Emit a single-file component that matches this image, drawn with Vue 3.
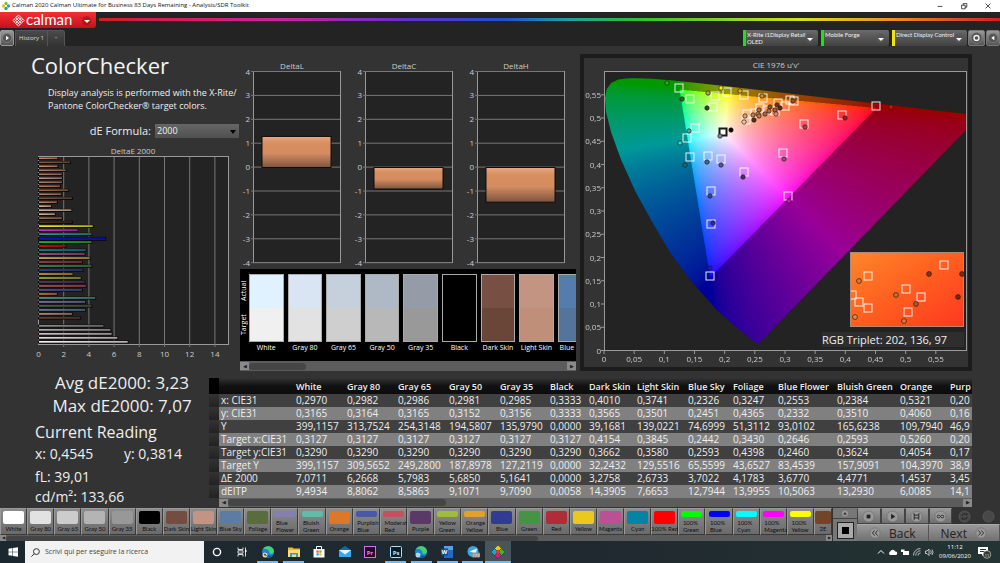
<script setup>
import { onMounted, ref } from 'vue'

const devices = [
  { name: 'X-Rite i1Display Retail', detail: 'OLED', color: '#16e516', size: 'wide' },
  { name: 'Mobile Forge', detail: '', color: '#16e516', size: 'slim' },
  { name: 'Direct Display Control', detail: '', color: '#f2e414', size: 'wide' }
]

const deltaE = [
  [1.5, '#d08a60'], [2.5, '#8a5a3c'], [1.5, '#d89468'], [2.15, '#c08060'], [1.85, '#b87c68'], [1.85, '#c89484'],
  [1.85, '#b08070'], [1.7, '#c87c48'], [2.35, '#a8683c'], [1.8, '#b88470'], [2.65, '#7c543c'], [1.45, '#c8845c'],
  [1, '#e8b890'], [2.6, '#e0b8a0'], [1.3, '#e8bc98'], [1.85, '#a87860'], [2.65, '#4c3028'], [4.3, '#ffff20'],
  [3.1, '#e030e0'], [4.2, '#30a8a0'], [5.3, '#1010c0'], [4.2, '#30c830'], [2.15, '#e01810'], [3.75, '#1890a0'],
  [3.65, '#b85890'], [4.05, '#d8c058'], [3.45, '#a84850'], [4.2, '#489850'], [3.5, '#404898'], [2.7, '#e0a040'],
  [3.35, '#a8c048'], [3.65, '#604070'], [3.75, '#b85868'], [3.45, '#5060a8'], [1.45, '#d88438'], [4.5, '#50a898'],
  [3.7, '#8080b0'], [4.2, '#586848'], [3.7, '#6888b0'], [2.65, '#c89484'], [3.3, '#684838'], [0, '#000000'],
  [5.15, '#989898'], [5.7, '#b8b8b8'], [5.8, '#d0d0d0'], [6.25, '#e8e8e8'], [7.07, '#ffffff']
]

const deltas = [
  { name: 'DeltaL', x: 253, value: 1.3 },
  { name: 'DeltaC', x: 365, value: -0.9 },
  { name: 'DeltaH', x: 477, value: -1.45 }
]
const steps = [4, 3, 2, 1, 0, -1, -2, -3, -4]

const swatches = [
  ['White', '#e0f1ff', '#f0f0f0'], ['Gray 80', '#dae5f3', '#e2e2e2'], ['Gray 65', '#c6d0dd', '#cfcfcf'],
  ['Gray 50', '#afb8c5', '#b8b8b8'], ['Gray 35', '#959ba7', '#999999'], ['Black', '#000000', '#000000'],
  ['Dark Skin', '#775043', '#694638'], ['Light Skin', '#c49483', '#bf8f79'], ['Blue', '#547cac', '#54749c']
]

const X = u => 604 + u * 603.3
const Y = v => 350.5 - v * 465
const uTicks = [0, 0.05, 0.1, 0.15, 0.2, 0.25, 0.3, 0.35, 0.4, 0.45, 0.5, 0.55]
const comma = n => String(n).replace('.', ',')

const locus = [
  [.2569, .0165], [.2557, .0159], [.2522, .0169], [.2461, .0226], [.2347, .035], [.2161, .0549], [.1877, .0871],
  [.1441, .151], [.1115, .208], [.0828, .2708], [.0521, .3427], [.0282, .4117], [.0119, .4698], [.0035, .5131],
  [.0014, .5432], [.0046, .5638], [.0123, .577], [.0231, .5837], [.036, .5861], [.0501, .5868], [.0792, .5856],
  [.1127, .5821], [.1531, .5766], [.2026, .5694], [.2623, .5604], [.3315, .5501], [.4035, .5393], [.4692, .5296],
  [.5203, .5219], [.5565, .5165], [.6005, .5099], [.6234, .5065]
]

const targets = [
  [679, 88], [690, 99], [715, 96], [713, 107], [727, 92], [744, 95], [763, 98], [695, 128], [687, 138],
  [690, 157], [708, 156], [721, 159], [744, 172], [711, 191], [711, 224], [710, 276], [783, 153], [788, 196],
  [790, 100], [794, 101], [785, 106], [876, 106], [842, 115], [804, 124], [747, 114], [746, 120], [760, 108],
  [755, 113], [767, 110], [778, 103], [775, 111]
]
const readings = [
  [667, 83, '#10b818'], [682, 99, '#286820'], [708, 93, '#a8b038'], [707, 108, '#304818'], [721, 88, '#f0f010'],
  [740, 91, '#e0b010'], [762, 96, '#d89018'], [689, 131, '#50a898'], [680, 143, '#10e8e8'], [731, 130, '#000000'],
  [720, 136, '#808898'], [685, 165, '#186888'], [707, 162, '#406898'], [721, 165, '#5058a0'], [743, 177, '#502860'],
  [710, 196, '#304898'], [713, 223, '#2828a0'], [710, 268, '#1818d8'], [784, 159, '#a04888'], [789, 201, '#d810d0'],
  [891, 107, '#d01010'], [845, 118, '#a81820'], [805, 127, '#b83848'], [793, 101, '#985018'], [745, 116, '#e0a070'],
  [744, 122, '#f0c8b0'], [753, 115, '#c08050'], [759, 110, '#b07040'], [758, 114, '#c88858'], [754, 120, '#503020'],
  [759, 116, '#c07850'], [765, 114, '#a86848'], [770, 107, '#885030'], [769, 111, '#b87040'], [777, 105, '#703818'],
  [775, 110, '#a86038'], [780, 108, '#602810'], [776, 114, '#e09070']
]
const insetTargets = [[944, 265], [868, 276], [906, 289], [921, 297], [859, 302], [868, 308], [908, 312], [852, 295]]
const insetReadings = [
  [929, 274, '#7a3a1c'], [859, 281, '#d08040'], [896, 295, '#c87030'], [916, 304, '#b05828'], [958, 297, '#702c14'],
  [855, 317, '#e09048'], [904, 321, '#e07840'], [962, 274, '#70301c']
]

const plot = ref(null)

function colorAt(u, v) {
  const X1 = (9 * u) / (4 * v)
  const Z1 = (12 - 3 * u - 20 * v) / (4 * v)
  const rgb = [
    3.2406 * X1 - 1.5372 - 0.4986 * Z1,
    -0.9689 * X1 + 1.8758 + 0.0415 * Z1,
    0.0557 * X1 - 0.204 + 1.057 * Z1
  ]
  const inside = rgb.every(c => c >= -0.002)
  const peak = Math.max(...rgb, 0.0001)
  return rgb.map(c => Math.pow(Math.max(c, 0) / peak, 1 / 1.9) * (inside ? 255 : 153))
}

onMounted(() => {
  const canvas = plot.value
  const { width: w, height: h } = canvas
  const ctx = canvas.getContext('2d')
  const image = ctx.createImageData(w, h)
  for (let y = 0; y < h; y++) {
    for (let x = 0; x < w; x++) {
      const [r, g, b] = colorAt((x / w) * 0.6, Math.max(0.6 * (1 - y / h), 0.001))
      image.data.set([r, g, b, 255], (y * w + x) * 4)
    }
  }
  ctx.putImageData(image, 0, 0)
  ctx.globalCompositeOperation = 'destination-in'
  ctx.beginPath()
  locus.forEach(([u, v]) => ctx.lineTo((u / 0.6) * w, (1 - v / 0.6) * h))
  ctx.closePath()
  ctx.fill()
})

const columns = ['White', 'Gray 80', 'Gray 65', 'Gray 50', 'Gray 35', 'Black', 'Dark Skin', 'Light Skin', 'Blue Sky', 'Foliage', 'Blue Flower', 'Bluish Green', 'Orange', 'Purp']
const widths = [51, 51, 51, 51, 50, 39, 48, 51, 45, 45, 59, 63, 50, 24]
const rows = [
  ['x: CIE31', '0,2970', '0,2982', '0,2986', '0,2981', '0,2985', '0,3333', '0,4010', '0,3741', '0,2326', '0,3247', '0,2553', '0,2384', '0,5321', '0,20'],
  ['y: CIE31', '0,3165', '0,3164', '0,3165', '0,3152', '0,3156', '0,3333', '0,3565', '0,3501', '0,2451', '0,4365', '0,2332', '0,3510', '0,4060', '0,16'],
  ['Y', '399,1157', '313,7524', '254,3148', '194,5807', '135,9790', '0,0000', '39,1681', '139,0221', '74,6999', '51,3112', '93,0102', '165,6238', '109,7940', '46,9'],
  ['Target x:CIE31', '0,3127', '0,3127', '0,3127', '0,3127', '0,3127', '0,3127', '0,4154', '0,3845', '0,2442', '0,3430', '0,2646', '0,2593', '0,5260', '0,20'],
  ['Target y:CIE31', '0,3290', '0,3290', '0,3290', '0,3290', '0,3290', '0,3290', '0,3662', '0,3580', '0,2593', '0,4398', '0,2460', '0,3624', '0,4054', '0,17'],
  ['Target Y', '399,1157', '309,5652', '249,2800', '187,8978', '127,2119', '0,0000', '32,2432', '129,5516', '65,5599', '43,6527', '83,4539', '157,9091', '104,3970', '38,9'],
  ['ΔE 2000', '7,0711', '6,2668', '5,7983', '5,6850', '5,1641', '0,0000', '3,2758', '2,6733', '3,7022', '4,1783', '3,6770', '4,4771', '1,4537', '3,45'],
  ['dEITP', '9,4934', '8,8062', '8,5863', '9,1071', '9,7090', '0,0058', '14,3905', '7,6653', '12,7944', '13,9955', '10,5063', '13,2930', '6,0085', '14,1']
]

const patches = [
  ['White', '#ffffff'], ['Gray 80', '#e2e2e2'], ['Gray 65', '#cccccc'], ['Gray 50', '#b4b4b4'], ['Gray 35', '#989898'],
  ['Black', '#000000'], ['Dark Skin', '#744c40'], ['Light Skin', '#c49482'], ['Blue Sky', '#5c7ca4'], ['Foliage', '#586c3c'],
  ['Blue Flower', '#8480b4', 1], ['Bluish Green', '#60bca8', 1], ['Orange', '#dc7828'], ['Purplish Blue', '#4858a8', 1],
  ['Moderate Red', '#c45060', 1], ['Purple', '#5c3868'], ['Yellow Green', '#a0bc3c', 1], ['Orange Yellow', '#e4a028', 1],
  ['Blue', '#303c94'], ['Green', '#449444'], ['Red', '#b02c38'], ['Yellow', '#ecc81c'], ['Magenta', '#bc5094'],
  ['Cyan', '#0484a4'], ['100% Red', '#ff0000'], ['100% Green', '#00ff00', 1], ['100% Blue', '#0000ff', 1],
  ['100% Cyan', '#00ffff', 1], ['100% Magenta', '#ff00ff', 1], ['100% Yellow', '#ffff00', 1], ['2E', '#744428']
]
</script>

<template>
  <div class="window">
    <header class="titlebar">
      <svg class="app-icon" viewBox="0 0 12 12" aria-hidden="true">
        <circle cx="6" cy="3" r="2" fill="#7ac143" /><circle cx="3" cy="6" r="2" fill="#e8c020" />
        <circle cx="9" cy="6" r="2" fill="#20a0d8" /><circle cx="6" cy="9" r="2" fill="#30a860" />
      </svg>
      <span class="title">Calman 2020 Calman Ultimate for Business 83 Days Remaining  - Analysis/SDR Toolkit</span>
      <button class="win" aria-label="Minimize"><svg viewBox="0 0 10 10"><path d="M2 5.500h6" /></svg></button>
      <button class="win" aria-label="Restore"><svg viewBox="0 0 10 10"><path d="M2 4h4.500v4.500H2zM4 4V2h4.500v4.500H6.500" /></svg></button>
      <button class="win" aria-label="Close"><svg viewBox="0 0 10 10"><path d="M2 2l6 6M8 2l-6 6" /></svg></button>
    </header>

    <div class="brandbar">
      <button class="brand">
        <svg class="brand-mark" viewBox="0 0 14 14" aria-hidden="true">
          <path d="M7 1l6 6-6 6-6-6zM4 4l6 6M10 4l-6 6M5.500 2.500l6 6M8.500 2.500l-6 6M2.500 5.500l6 6M11.500 5.500l-6 6" />
        </svg>
        <span class="brand-name">calman</span>
        <i class="caret ring"></i>
      </button>
      <div class="rainbow"></div>
    </div>

    <nav class="tabs">
      <button class="knob" aria-label="Expand"><svg viewBox="0 0 12 14"><circle cx="6" cy="7" r="4.500" /><path d="M5 4.800L8 7 5 9.200z" /></svg></button>
      <button class="tab">History 1</button>
      <button class="tab add" aria-label="Add tab"><span>+</span></button>
      <span class="spacer"></span>
      <button v-for="d in devices" :key="d.name" class="device" :class="d.size">
        <i class="led" :style="{ background: d.color }"></i>
        <span class="device-text">{{ d.name }}<br v-if="d.detail">{{ d.detail }}</span>
        <i class="caret ring dark"></i>
      </button>
      <button class="knob right" aria-label="Settings"><svg viewBox="0 0 14 14"><circle cx="7" cy="7" r="5.500" /><circle class="gear" cx="7" cy="7" r="2.500" /></svg></button>
      <button class="knob right small" aria-label="Collapse"><svg viewBox="0 0 14 14"><circle cx="7" cy="7" r="5.500" /><path d="M8.500 4.500L5 7l3.500 2.500z" /></svg></button>
    </nav>

    <main class="main">
      <section class="top">
        <div class="summary">
          <h1>ColorChecker</h1>
          <p class="intro">Display analysis is performed with the X-Rite/<br>Pantone ColorChecker® target colors.</p>
          <div class="formula">
            <label for="formula">dE Formula:</label>
            <select id="formula"><option>2000</option></select>
          </div>
          <svg class="chart" viewBox="0 145 240 220">
            <defs>
              <linearGradient id="shade" x1="0" x2="1" y1="0" y2="0">
                <stop offset="0" stop-color="#000" stop-opacity="0" /><stop offset="1" stop-color="#000" stop-opacity=".3" />
              </linearGradient>
            </defs>
            <text class="label mid" x="133" y="154">DeltaE 2000</text>
            <rect class="plot" x="38.500" y="156.500" width="190" height="188" />
            <line v-for="n in 7" :key="n" class="grid" :x1="38.5 + n * 25.2" :x2="38.5 + n * 25.2" y1="157" y2="347" />
            <g v-for="(b, i) in deltaE" :key="'b' + i">
              <template v-if="b[0]">
                <rect x="38" :y="157 + i * 3.99" :width="b[0] * 12.6 + 1.5" :height="i === 20 ? 4 : 3" fill="#0c0808" />
                <rect x="39" :y="157.5 + i * 3.99" :width="b[0] * 12.6 - .5" :height="i === 20 ? 2.6 : 1.6" :fill="b[1]" />
                <rect x="39" :y="157.5 + i * 3.99" :width="b[0] * 12.6 - .5" height="1.600" fill="url(#shade)" />
              </template>
            </g>
            <text v-for="n in 8" :key="'t' + n" class="label mid" :x="38.5 + (n - 1) * 25.2" y="357">{{ (n - 1) * 2 }}</text>
          </svg>
        </div>

        <div class="middle">
          <svg class="chart" viewBox="240 58 340 211">
            <defs>
              <linearGradient id="copper" x1="0" x2="0" y1="0" y2="1">
                <stop offset="0" stop-color="#e4a888" /><stop offset=".2" stop-color="#d8905f" />
                <stop offset=".55" stop-color="#d48c60" /><stop offset="1" stop-color="#7c5440" />
              </linearGradient>
            </defs>
            <g v-for="d in deltas" :key="d.name">
              <text class="label mid" :x="d.x + 39" y="69">{{ d.name }}</text>
              <rect class="plot" :x="d.x + .5" y="71.500" width="87" height="191" />
              <g v-for="(s, i) in steps" :key="s">
                <line class="grid" :x1="d.x - 2" :x2="d.x + 87" :y1="71.5 + i * 23.9" :y2="71.5 + i * 23.9" />
                <text class="label end" :x="d.x - 3" :y="74.5 + i * 23.9">{{ s }}</text>
              </g>
              <rect :x="d.x + 9" :y="d.value > 0 ? 167.5 - d.value * 23.9 : 167.5" width="69" :height="Math.abs(d.value) * 23.9" fill="url(#copper)" stroke="#100c0a" />
            </g>
          </svg>
          <div class="compare">
            <div class="sides"><span>Actual</span><span>Target</span></div>
            <div v-for="s in swatches" :key="s[0]" class="swatch">
              <div class="pair"><i :style="{ background: s[1] }"></i><i :style="{ background: s[2] }"></i></div>
              <span>{{ s[0] }}</span>
            </div>
          </div>
          <div class="scroll"><button aria-label="Scroll left">◀</button><i class="thumb short"></i><button aria-label="Scroll right">▶</button></div>
        </div>

        <div class="cie">
          <svg class="chart" viewBox="584 58 384 309">
            <defs>
              <linearGradient id="warm" x1="0" y1="0" x2="1" y2="1">
                <stop offset="0" stop-color="#ff8628" /><stop offset=".5" stop-color="#ff5e20" /><stop offset="1" stop-color="#ff3820" />
              </linearGradient>
              <clipPath id="inset"><rect x="851" y="253" width="113" height="73" /></clipPath>
            </defs>
            <text class="label mid" x="776" y="68">CIE 1976 u'v'</text>
            <rect class="plot" x="604.500" y="71.500" width="362" height="279" />
            <foreignObject x="604" y="71.500" width="362" height="279">
              <canvas ref="plot" class="gamut" width="724" height="558"></canvas>
            </foreignObject>
            <path class="axis" d="M604.500 350.500V71.500H966.500V350.500z" />
            <g v-for="t in uTicks" :key="t">
              <line class="axis" :x1="X(t)" :x2="X(t)" y1="351" y2="354" />
              <line class="axis" x1="601" x2="604" :y1="Y(t)" :y2="Y(t)" />
              <text class="label mid" :x="X(t)" y="362">{{ comma(t) }}</text>
              <text class="label end" x="601" :y="Y(t) + 3">{{ comma(t) }}</text>
            </g>
            <rect v-for="(p, i) in targets" :key="'s' + i" class="target" :x="p[0] - 4" :y="p[1] - 4" width="8" height="8" />
            <rect class="target white-point" x="719.500" y="128.500" width="7" height="7" />
            <circle v-for="(p, i) in readings" :key="'c' + i" class="reading" :cx="p[0]" :cy="p[1]" r="2.200" :fill="p[2]" />
            <rect x="850.500" y="252.500" width="113" height="74" fill="url(#warm)" stroke="#b08878" />
            <g clip-path="url(#inset)">
              <rect v-for="(p, i) in insetTargets" :key="'is' + i" class="target" :x="p[0] - 4" :y="p[1] - 4" width="8" height="8" />
              <circle v-for="(p, i) in insetReadings" :key="'ic' + i" class="reading" :cx="p[0]" :cy="p[1]" r="2.400" :fill="p[2]" />
            </g>
            <rect x="822" y="332" width="142" height="15" fill="#2e2e2e" />
            <text class="triplet" x="822" y="344">RGB Triplet: 202, 136, 97</text>
          </svg>
        </div>
      </section>

      <section class="bottom">
        <div class="stats">
          <p class="big">Avg dE2000: 3,23</p>
          <p class="big">Max dE2000: 7,07</p>
          <h2>Current Reading</h2>
          <p class="pair-line"><span>x: 0,4545</span><span>y: 0,3814</span></p>
          <p class="line gap">fL: 39,01</p>
          <p class="line">cd/m²: 133,66</p>
        </div>
        <div class="data">
          <div class="clip">
            <table>
              <colgroup><col class="pick-col"><col class="name-col"><col v-for="(w, i) in widths" :key="i" :style="{ width: w + 'px' }"></colgroup>
              <thead><tr><td class="pick"></td><th></th><th v-for="c in columns" :key="c" scope="col">{{ c }}</th></tr></thead>
              <tbody>
                <tr v-for="r in rows" :key="r[0]">
                  <td class="pick"></td>
                  <th scope="row">{{ r[0] }}</th>
                  <td v-for="(c, i) in r.slice(1)" :key="i">{{ c }}</td>
                </tr>
              </tbody>
            </table>
          </div>
          <div class="scroll table-scroll"><button aria-label="Scroll left">◀</button><i class="thumb long"></i><button aria-label="Scroll right">▶</button></div>
        </div>
      </section>
    </main>

    <section class="palette">
      <div class="strip">
        <div class="patches">
          <button v-for="p in patches" :key="p[0]" class="patch" :class="{ two: p[2] }">
            <i :style="{ background: p[1] }"></i><span>{{ p[0] }}</span>
          </button>
        </div>
        <div class="scroll strip-scroll"><button aria-label="Scroll left">◀</button><i class="thumb strip-thumb"></i><button aria-label="Scroll right">▶</button></div>
      </div>
      <div class="meter">
        <button class="eject" aria-label="Options"><svg viewBox="0 0 12 10"><circle cx="6" cy="5" r="4" /><path d="M4 6l2-2.500L8 6z" /></svg></button>
        <button class="full" aria-label="Pattern window"><i></i></button>
      </div>
      <div class="controls">
        <div class="tools">
          <button aria-label="Stop"><svg viewBox="0 0 14 14"><circle cx="7" cy="7" r="6" /><path d="M5 5h4v4H5z" /></svg></button>
          <button aria-label="Play"><svg viewBox="0 0 14 14"><circle cx="7" cy="7" r="6" /><path d="M5.500 4L10 7l-4.500 3z" /></svg></button>
          <button aria-label="Step"><svg viewBox="0 0 14 14"><circle cx="7" cy="7" r="6" /><path class="stroke" d="M4.500 3.500v7M9.500 3.500v7M4.500 5.500h5M4.500 8.500h5" /></svg></button>
          <button aria-label="Loop"><svg viewBox="0 0 14 14"><circle cx="7" cy="7" r="6" /><path class="stroke" d="M7 7c-1-2-3.500-2-3.500 0s2.500 2 3.500 0 3.500-2 3.500 0-2.500 2-3.500 0" /></svg></button>
          <button class="off" aria-label="Refresh"><svg viewBox="0 0 14 14"><circle cx="7" cy="7" r="6" /><path class="stroke" d="M4 6.500a3 3 0 0 1 5.500-1V3.500M10 7.500a3 3 0 0 1-5.500 1v2" /></svg></button>
          <button class="off" aria-label="Record"><svg viewBox="0 0 14 14"><circle cx="7" cy="7" r="6" /></svg></button>
        </div>
        <div class="steps">
          <button><svg viewBox="0 0 14 14"><circle cx="7" cy="7" r="6" /><path class="stroke" d="M6.500 4L4 7l2.500 3M10 4L7.500 7l2.500 3" /></svg>Back</button>
          <button>Next<svg viewBox="0 0 14 14"><circle cx="7" cy="7" r="6" /><path class="stroke" d="M4 4l2.500 3L4 10M7.500 4L10 7l-2.500 3" /></svg></button>
        </div>
      </div>
    </section>

    <footer class="taskbar">
      <button class="start" aria-label="Start"><svg viewBox="0 0 12 12"><path fill="#fff" d="M1.500 2.700l4-.6v3.600h-4zM6 2l5-.8v4.500H6zM1.500 6.200h4v3.600l-4-.6zM6 6.200h5v4.500L6 9.900z" /></svg></button>
      <label class="search">
        <svg viewBox="0 0 12 12"><circle cx="7" cy="5" r="3.200" /><path d="M4.700 7.300L1.500 10.500" /></svg>
        <input type="text" placeholder="Scrivi qui per eseguire la ricerca" aria-label="Scrivi qui per eseguire la ricerca">
      </label>
      <div class="tasks">
        <button class="task" aria-label="Cortana"><svg viewBox="0 0 14 14"><circle cx="7" cy="7" r="3.600" fill="none" stroke="#fff" stroke-width="1.400" /></svg></button>
        <button class="task" aria-label="Task view"><svg viewBox="0 0 14 14"><path d="M3 2.500v2h5v-2M3 11.500v-2h5v2M3 5.800h5v2.400H3zM10.500 2.500v9" fill="none" stroke="#ddd" /><path d="M10 5h1.500v2H10z" fill="#fff" /></svg></button>
        <button class="task open" aria-label="Edge">
          <svg viewBox="0 0 14 14"><circle cx="7" cy="7" r="6" fill="#1688d0" /><path d="M2 4.500C4 0 12 0 13 6c.3 2.500-3 3.500-4.500 2.500C9 5 5 3 2 4.500z" fill="#48d070" /><path d="M5.500 7c0 3 3 4.500 6 3.500C8 14.500 2.500 12 3 8z" fill="#1050a0" /><circle cx="4" cy="10" r="2.500" fill="#e8d8b8" /><path d="M2.500 10l1.500-1.500L6 11z" fill="#383028" /></svg>
        </button>
        <button class="task open" aria-label="File Explorer"><svg viewBox="0 0 14 14"><path d="M1 2.500h4.500l1 1H13V12H1z" fill="#f4b830" /><path d="M1 5h12v7H1z" fill="#ffdc78" /><path d="M3 8h8v4H9V9.500H5V12H3z" fill="#3898d8" /></svg></button>
        <button class="task" aria-label="Store"><svg viewBox="0 0 14 14"><path d="M4.500 4V1.500h5V4" fill="none" stroke="#fff" /><path d="M1.500 4h11v8.500h-11z" fill="#fff" /><path d="M4.500 5.500h2.200v2.200H4.500z" fill="#f05020" /><path d="M7.300 5.500h2.200v2.200H7.300z" fill="#78b810" /><path d="M4.500 8.300h2.200v2.200H4.500z" fill="#10a0e8" /><path d="M7.300 8.300h2.200v2.200H7.300z" fill="#f8b810" /></svg></button>
        <button class="task" aria-label="Mail"><svg viewBox="0 0 14 14"><path d="M1 5l6-4 6 4v7H1z" fill="#1068b8" /><path d="M1 5h12v7H1z" fill="#38a8e8" /><path d="M1 5l6 4.500L13 5z" fill="#e8f4fc" /></svg></button>
        <button class="task" aria-label="Premiere Pro"><svg viewBox="0 0 14 14"><rect x="1.500" y="1.500" width="11" height="11" fill="#28002c" stroke="#d070e8" /><text x="7" y="9.500" class="badge" fill="#e088f8">Pr</text></svg></button>
        <button class="task open" aria-label="Photoshop"><svg viewBox="0 0 14 14"><rect x="1.500" y="1.500" width="11" height="11" rx="1" fill="#061e2c" stroke="#a8e0f8" /><text x="7" y="9.500" class="badge" fill="#b8e8ff">Ps</text></svg></button>
        <button class="task open" aria-label="Edge profile"><svg viewBox="0 0 14 14"><circle cx="7" cy="7" r="6" fill="#1688d0" /><path d="M2 4.500C4 0 12 0 13 6c.3 2.500-3 3.500-4.500 2.500C9 5 5 3 2 4.500z" fill="#48d070" /><path d="M5.500 7c0 3 3 4.500 6 3.500C8 14.500 2.500 12 3 8z" fill="#1050a0" /><circle cx="4" cy="10" r="2.500" fill="#a8d8f0" /></svg></button>
        <button class="task open" aria-label="Word"><svg viewBox="0 0 14 14"><path d="M4 1h9v12H4z" fill="#58a0e8" /><path d="M4 5h9v8H4z" fill="#2468c8" /><path d="M1 3.500h7v7H1z" fill="#184890" /><text x="4.500" y="9" class="badge" fill="#fff">W</text></svg></button>
        <button class="task open" aria-label="Telegram"><svg viewBox="0 0 14 14"><circle cx="7" cy="6.500" r="5.500" fill="#38a8e0" /><path d="M3.500 6.500L11 3.500l-1.500 6-2.500-2z" fill="#fff" /><rect x="6" y="7.500" width="8" height="5" rx="1" fill="#909498" /><text x="10" y="11.500" class="tiny" fill="#fff">172</text></svg></button>
        <button class="task open active" aria-label="Calman"><svg viewBox="0 0 14 14"><g stroke="#20302c" stroke-width=".5"><path d="M7 0l3.500 3.500L7 7 3.500 3.500z" fill="#e8c810" stroke-linejoin="round" /><path d="M3.500 3.500L7 7l-3.500 3.500L0 7z" fill="#18a8d0" /><path d="M10.500 3.500L14 7l-3.500 3.500L7 7z" fill="#30b838" /><path d="M7 7l3.500 3.500L7 14l-3.500-3.500z" fill="#d81888" /></g><path d="M7 4.500L9.500 7 7 9.500 4.500 7z" fill="#e83828" /></svg></button>
      </div>
      <span class="spacer"></span>
      <div class="tray">
        <svg viewBox="0 0 10 10"><path d="M2 6.500l3-3 3 3" fill="none" stroke="#fff" /></svg>
        <svg viewBox="0 0 10 10"><path d="M2 8a2 2 0 0 1 .2-3.500 2.700 2.700 0 0 1 5 0A1.800 1.800 0 0 1 8 8z" fill="#fff" /></svg>
        <svg viewBox="0 0 10 10"><path d="M3 4h6v4H3zM1 2.500h3.500V5H1z" fill="#fff" /></svg>
        <svg viewBox="0 0 10 10"><path d="M1.500 8.500a7 7 0 0 1 7-7M3.800 8.500a4.500 4.500 0 0 1 4.700-4.700M6 8.500a2.500 2.500 0 0 1 2.500-2.500" fill="none" stroke="#b8bcbc" /></svg>
        <svg viewBox="0 0 10 10"><path d="M1.500 4H3l2-2v6.500l-2-2H1.500z M6.500 3.500q1.500 1.700 0 3.500M8 2.500q2 2.700 0 5.500" fill="none" stroke="#e8e8e8" stroke-width=".8" /></svg>
      </div>
      <div class="clock"><time>11:12</time><time>09/06/2020</time></div>
      <button class="notes" aria-label="Notifications"><svg viewBox="0 0 16 14"><path d="M2 2h10v7H8l-2 2V9H2z" fill="#fff" /><path d="M4 4.500h6M4 6.500h5" stroke="#283838" /><circle cx="11" cy="9.500" r="3.800" fill="#30383a" stroke="#c8c8c8" stroke-width=".7" /><text x="11" y="11.500" class="tiny" fill="#fff">11</text></svg></button>
    </footer>
  </div>
</template>

<style>
html, body { background: #1e1e1e; }
</style>

<style scoped>
.window { display: flex; flex-direction: column; min-height: 100vh; background: #232323; color: #eee; font-family: "Open Sans", "Noto Sans", sans-serif; font-size: 8px; line-height: 1.2; overflow: hidden; }
* { box-sizing: border-box; }
button, select, input { font: inherit; color: inherit; border: 0; padding: 0; margin: 0; background: none; }
h1, h2, p { margin: 0; font-weight: 400; }
i { display: block; font-style: normal; }
svg { display: block; }
.spacer { flex: 1; }

.titlebar { display: flex; align-items: center; height: 12px; background: #fff; color: #111; font-size: 6px; }
.app-icon { width: 10px; height: 10px; margin: 0 1px 0 1px; }
.title { flex: 1; white-space: nowrap; }
.win { width: 24px; height: 10px; }
.win svg { width: 8px; height: 8px; margin: 1px auto; fill: none; stroke: #222; }

.brandbar { display: flex; height: 17px; }
.brand { display: flex; align-items: center; width: 96px; height: 16px; padding: 0 5px 0 12px; color: #fff; background: linear-gradient(#f03038, #c81018); border-radius: 0 0 3px 0; }
.brand-mark { width: 13px; height: 13px; fill: none; stroke: #fff; stroke-width: .9; }
.brand-name { flex: 1; padding: 0 0 3px 1px; text-align: left; font-family: "Lato", sans-serif; font-size: 15px; line-height: 14px; }
.caret { position: relative; }
.ring { width: 9px; height: 9px; border-radius: 50%; background: rgba(120, 0, 0, .35); }
.ring::after { content: ""; position: absolute; left: 2px; top: 4px; border: 3px solid transparent; border-top-color: #fff; border-bottom: 0; }
.ring.dark { background: #555; }
.rainbow { flex: 1; height: 3px; margin: 6px 0 0 3px; background: linear-gradient(90deg, #d02028, #d020a0 20%, #6030d0 35%, #2050d8 45%, #20a0a0 52%, #30c030 60%, #d8e020 78%, #f09020 88%, #d02020); }

.tabs { display: flex; height: 17px; padding-top: 1px; }
.knob { width: 14px; margin-right: 1px; border: 1px solid #999; border-radius: 2px; background: linear-gradient(#999, #555); }
.knob svg { width: 12px; height: 14px; }
.knob circle { fill: #555; stroke: #888; stroke-width: .6; }
.knob path { fill: #fff; }
.knob .gear { fill: none; stroke: #eee; stroke-width: 1.4; }
.knob.right { width: 17px; margin: 0 0 0 1px; border-color: #777; }
.knob.right.small { width: 14px; }
.knob.right svg { width: 100%; }
.tab { padding: 0 3px; border: 1px solid #555; border-bottom: 0; background: linear-gradient(#4a4a4a, #333); color: #ddd; font-size: 6px; }
.tab.add { width: 18px; margin-left: -1px; border-radius: 0 3px 0 0; color: #888; }
.device { display: flex; align-items: center; height: 16px; margin-right: 3px; padding-right: 4px; color: #eee; font-family: "Lato", sans-serif; font-size: 6px; line-height: 7px; text-align: left; background: linear-gradient(#6a6a6a, #424242); border-radius: 2px; }
.device:nth-last-child(3) { margin-right: 0; }
.device.wide { width: 75px; }
.device.slim { width: 68px; }
.led { width: 3px; height: 16px; margin-right: 1px; }
.device-text { flex: 1; align-self: flex-start; white-space: nowrap; padding-top: 1px; }
.device .ring { margin-left: -2px; }

.main { flex: 1; background: #333; }
.top { display: grid; grid-template-columns: minmax(0, 24fr) minmax(0, 34fr) minmax(0, 42fr); }
.chart { width: 100%; }
.label { fill: #ccc; font-size: 8px; }
.mid, .badge, .tiny { text-anchor: middle; }
.end { text-anchor: end; }
.plot { fill: #232323; stroke: #999; }
.grid { stroke: #777; }
.axis { fill: none; stroke: #999; }
.gamut { display: block; width: 100%; height: 100%; }
.target { fill: none; stroke: #fff; stroke-opacity: .9; }
.white-point { stroke: #000; stroke-width: 2; }
.reading { stroke: #301810; stroke-width: .7; }
.triplet { fill: #eee; font-size: 11px; }
.badge { font-size: 6px; font-weight: 700; }
.tiny { font-size: 4px; }

h1 { margin: 4px 0 0 31px; font-size: 22px; line-height: 30px; color: #f4f4f4; }
.intro { margin: 6px 0 0 48px; font-size: 9px; line-height: 13px; white-space: nowrap; }
.formula { position: relative; display: flex; align-items: center; justify-content: flex-end; gap: 4px; height: 14px; margin: 12px 1px 7px 0; font-size: 11px; }
.formula select { width: 84px; height: 14px; padding: 0 2px; appearance: none; font-size: 9px; color: #eee; background: linear-gradient(#666, #505050); border-radius: 0; }
.formula::after { content: ""; position: absolute; right: 3px; top: 6px; border: 3px solid transparent; border-top: 4px solid #000; border-bottom: 0; }

.middle { padding-top: 12px; }
.compare { display: flex; gap: 4px; height: 92px; margin-right: 4px; overflow: hidden; padding-top: 5px; background: #000; color: #fff; }
.sides { display: flex; flex: none; flex-direction: row-reverse; justify-content: space-around; width: 5px; height: 68px; writing-mode: vertical-rl; transform: rotate(180deg); font-size: 7px; line-height: 7px; }
.swatch { flex: 0 0 10.3%; font-size: 7px; line-height: 10px; text-align: center; white-space: nowrap; }
.pair { border: 1px solid #aaa; margin-bottom: 1px; }
.pair i { height: 33px; }
.swatch:last-child { flex: 1; min-width: 0; }
.swatch:last-child .pair { border-right: 0; }

.scroll { display: flex; align-items: center; height: 10px; margin-right: 4px; background: #5c5c5c; }
.scroll button { width: 9px; height: 8px; color: #222; background: #8a8a8a; font-size: 5px; line-height: 7px; }
.scroll button:last-child { margin-left: auto; }
.thumb { height: 7px; border-radius: 4px; background: #454545; }
.short { width: 17%; }
.long { width: 29%; }
.strip-thumb { width: 64%; }

.cie { align-self: start; margin: 8px 28px 0 0; border: 4px solid #1c1c1c; }

.bottom { display: grid; grid-template-columns: 209px minmax(0, 1fr); padding-right: 28px; }
.stats { padding-left: 35px; }
.big { text-align: center; font-size: 17px; line-height: 23px; }
h2 { margin-top: 4px; font-size: 16px; line-height: 23px; }
.pair-line, .line { font-size: 14px; line-height: 20px; white-space: nowrap; }
.pair-line span { display: inline-block; width: 89px; }
.pair-line span:last-child { width: auto; }
.gap { margin-top: 3px; }
.data { min-width: 0; padding-top: 7px; }
.clip { overflow: hidden; }
table { width: 100%; min-width: 763px; table-layout: fixed; border-collapse: collapse; font-size: 10px; line-height: 13px; }
.pick-col { width: 10px; }
.name-col { width: 75px; }
th, td { height: 13px; padding: 0 0 0 2px; white-space: nowrap; text-align: left; font-weight: 400; }
thead th { height: 16px; font-size: 9px; font-weight: 600; }
thead tr { background: linear-gradient(#333, #111 50%, #0c0c0c); }
thead .pick { background: #000; }
tbody tr { background: #404040; }
tbody tr:nth-child(even) { background: #808080; }
tbody .pick { background: linear-gradient(#333, #222); }
.table-scroll { height: 9px; margin: 0 0 0 10px; }

.palette { display: flex; height: 33px; background: #222; color: #222; }
.strip { flex: 1; min-width: 0; }
.patches { display: grid; grid-template-columns: repeat(30, minmax(0, 1fr)) 18px; height: 27px; overflow: hidden; }
.patch { min-width: 0; display: flex; flex-direction: column; align-items: center; justify-content: space-between; padding: 2px 0 1px; border: 1px solid #3a3a3a; border-top-color: #999; border-left-color: #999; background: linear-gradient(#8c8c8c, #6a6a6a); font-family: "Lato", sans-serif; font-size: 6px; line-height: 8px; color: #111; white-space: nowrap; }
.patch i { width: 21px; height: 13px; flex: none; border-radius: 2px; }
.patch:last-child i { width: 16px; }
.patch.two i { height: 6px; }
.patch.two span { width: 18px; line-height: 7px; white-space: normal; text-align: left; }
.strip-scroll { height: 6px; margin: 0; }
.strip-scroll button { width: 6px; height: 6px; line-height: 6px; font-size: 4px; }
.strip-scroll .thumb { height: 5px; }
.meter { display: flex; flex-direction: column; width: 25px; background: #777; border-left: 1px solid #333; }
.eject { height: 10px; }
.eject svg { width: 12px; height: 9px; margin: 0 auto; }
.full { flex: 1; border-top: 1px solid #444; }
.full i { width: 15px; height: 15px; margin: 0 auto; border: 4px solid #aaa; outline: 1px solid #222; background: #000; }
.controls { width: 143px; }
.controls svg, .eject svg { fill: #222; }
.controls circle, .eject circle { fill: #999; stroke: #666; stroke-width: .6; }
.controls .stroke { fill: none; stroke: #222; }
.tools { display: grid; grid-template-columns: repeat(6, 1fr); height: 16px; }
.tools button { border: 1px solid #444; border-top-color: #999; background: linear-gradient(#999, #707070); }
.tools svg { width: 13px; height: 13px; margin: 0 auto; }
.tools .off { background: #333; border-color: #333; }
.tools .off circle { fill: #484848; }
.steps { display: grid; grid-template-columns: 1fr 1fr; height: 17px; }
.steps button { display: flex; align-items: center; justify-content: center; gap: 8px; border-right: 1px solid #555; border-top: 1px solid #aaa; background: linear-gradient(#999, #707070); font-size: 12px; line-height: 15px; color: #222; }
.steps svg { width: 12px; height: 12px; }

.taskbar { display: flex; align-items: stretch; height: 22px; background: linear-gradient(90deg, #1c2830, #20292f 60%, #243434); }
.start { width: 25px; }
.start svg { width: 12px; height: 12px; margin: 0 auto; }
.search { display: flex; align-items: center; width: 179px; background: #f2f2f2; color: #333; }
.search svg { width: 11px; height: 11px; margin: 0 4px 0 5px; fill: none; stroke: #222; }
.search input { flex: 1; min-width: 0; font-size: 7px; outline: 0; }
.search input::placeholder { color: #444; opacity: 1; }
.tasks { display: grid; grid-template-columns: repeat(12, 1fr); width: 307px; }
.task { border-bottom: 2px solid transparent; }
.task svg { width: 14px; height: 14px; margin: 1px auto 0; }
.task.open { background: linear-gradient(#76b9ed, #76b9ed) bottom / 21px 2px no-repeat border-box; }
.task.active { background-color: #48565c; background-size: 100% 2px; }
.tray { display: flex; align-items: center; gap: 2px; }
.tray svg { width: 10px; height: 10px; }
.clock { display: flex; flex-direction: column; justify-content: center; width: 38px; margin: 0 2px 0 2px; text-align: center; font-size: 6px; line-height: 9px; color: #fff; }
.notes { width: 16px; margin-right: 8px; }
.notes svg { width: 16px; height: 14px; }
</style>
